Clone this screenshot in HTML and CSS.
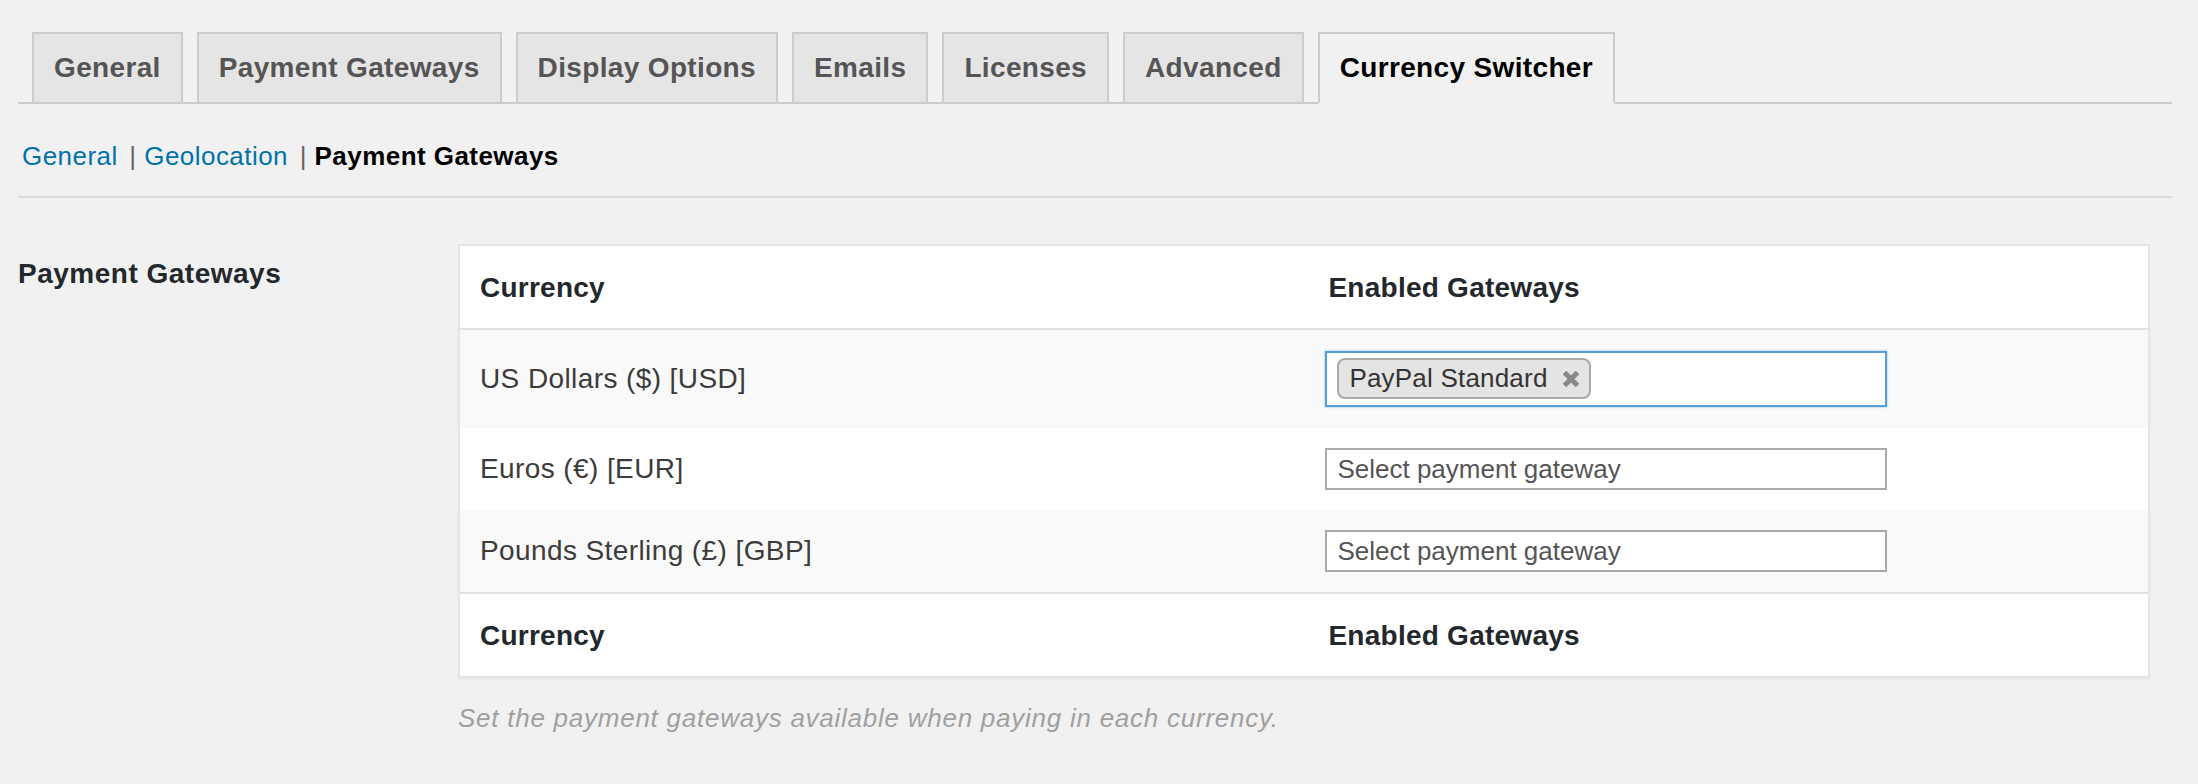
FILE: index.html
```html
<!DOCTYPE html>
<html lang="en">
<head>
    <meta charset="UTF-8">
    <meta name="viewport" content="width=device-width, initial-scale=1.0">
    <title>Currency Switcher - Payment Gateways</title>
    <link rel="stylesheet" href="styles.css">
</head>
<body>
<div class="wrap">
    <nav class="nav-tabs">
        <a href="#" class="tab">General</a>
        <a href="#" class="tab">Payment Gateways</a>
        <a href="#" class="tab">Display Options</a>
        <a href="#" class="tab">Emails</a>
        <a href="#" class="tab">Licenses</a>
        <a href="#" class="tab">Advanced</a>
        <a href="#" class="tab tab-active">Currency Switcher</a>
    </nav>

    <div class="subnav">
        <a href="#">General</a> <span class="sep">|</span> <a href="#">Geolocation</a> <span class="sep">|</span> <strong>Payment Gateways</strong>
    </div>

    <div class="settings-row">
        <div class="settings-label">Payment Gateways</div>
        <div class="settings-field">
            <table class="gateway-table">
                <thead>
                    <tr>
                        <th class="col-currency">Currency</th>
                        <th class="col-gateways">Enabled Gateways</th>
                    </tr>
                </thead>
                <tbody>
                    <tr class="row-focus">
                        <td>US Dollars ($) [USD]</td>
                        <td>
                            <div class="select select-multi">
                                <span class="chip">PayPal Standard
                                    <svg class="chip-remove" width="18" height="16" viewBox="0 0 18 16"><path d="M2.5 1.5 L15.5 14.5 M15.5 1.5 L2.5 14.5" stroke="#888" stroke-width="5"/></svg>
                                </span>
                            </div>
                        </td>
                    </tr>
                    <tr>
                        <td>Euros (€) [EUR]</td>
                        <td><div class="select">Select payment gateway</div></td>
                    </tr>
                    <tr>
                        <td>Pounds Sterling (£) [GBP]</td>
                        <td><div class="select">Select payment gateway</div></td>
                    </tr>
                </tbody>
                <tfoot>
                    <tr>
                        <th class="col-currency">Currency</th>
                        <th class="col-gateways">Enabled Gateways</th>
                    </tr>
                </tfoot>
            </table>
            <p class="description">Set the payment gateways available when paying in each currency.</p>
        </div>
    </div>
</div>
</body>
</html>
```

FILE: styles.css
```css
body {
    margin: 0;
    background-color: #f1f1f1;
    font-family: "Liberation Sans", Arial, sans-serif;
    color: #444;
}
.wrap {
    padding: 0 26px 0 18px;
}

/* top tabs */
.nav-tabs {
    display: flex;
    gap: 14px;
    padding: 32px 0 0 14px;
    border-bottom: 2px solid #ccc;
}
.tab {
    display: block;
    padding: 10px 20px;
    border: 2px solid #ccc;
    border-bottom: none;
    background: #e5e5e5;
    color: #555;
    font-size: 28px;
    line-height: 48px;
    font-weight: bold;
    letter-spacing: 0.35px;
    text-decoration: none;
    white-space: nowrap;
}
.tab-active {
    background: #f1f1f1;
    color: #000;
    margin-bottom: -2px;
    border-bottom: 2px solid #f1f1f1;
}

/* sub navigation */
.subnav {
    margin-top: 26px;
    padding: 0 0 14px 4px;
    border-bottom: 2px solid #dcdcdc;
    font-size: 26px;
    line-height: 52px;
    letter-spacing: 0.45px;
    color: #666;
}
.subnav a {
    color: #0073aa;
    text-decoration: none;
}
.subnav strong {
    color: #000;
}
.sep {
    margin-left: 4px;
}

/* settings row */
.settings-row {
    display: grid;
    grid-template-columns: 420px 1fr;
    margin-top: 18px;
}
.settings-label {
    padding: 40px 20px 40px 0;
    font-size: 28px;
    line-height: 1.3;
    font-weight: bold;
    letter-spacing: 0.5px;
    color: #23282d;
}
.settings-field {
    padding: 28px 22px 30px 20px;
}

.gateway-table {
    width: 100%;
    table-layout: fixed;
    border-spacing: 0;
    background: #fff;
    border: 2px solid #e5e5e5;
    box-shadow: 0 2px 2px rgba(0,0,0,0.04);
}
.gateway-table th {
    width: 50%;
    padding: 22px 20px 20px;
    text-align: left;
    font-size: 28px;
    line-height: 40px;
    font-weight: bold;
    letter-spacing: 0.25px;
    color: #23282d;
}
.gateway-table .col-currency {
    padding-right: 26px;
}
.gateway-table .col-gateways {
    padding-left: 23px;
}
.gateway-table thead th {
    border-bottom: 2px solid #e1e1e1;
}
.gateway-table tfoot th {
    border-top: 2px solid #e1e1e1;
}
.gateway-table td {
    padding: 20px;
    font-size: 28px;
    line-height: 40px;
    letter-spacing: 0.4px;
    color: #3c3c3c;
    vertical-align: middle;
}
.gateway-table tbody tr:nth-child(odd) {
    background: #f9f9f9;
}
.gateway-table .row-focus td {
    padding-top: 21px;
    padding-bottom: 21px;
}

/* select boxes */
.select {
    width: 562px;
    box-sizing: border-box;
    height: 42px;
    padding: 0 10px;
    border: 2px solid #aaa;
    background: #fff;
    font-size: 26px;
    line-height: 38px;
    letter-spacing: 0;
    color: #555;
    white-space: nowrap;
}
.select-multi {
    height: 56px;
    padding: 5px 10px;
    border-color: #5b9dd9;
    box-shadow: 0 0 2px rgba(30,140,190,0.6);
}
.chip {
    display: inline-flex;
    align-items: center;
    gap: 14px;
    padding: 0 9px 0 10px;
    border: 2px solid #aaa;
    border-radius: 8px;
    background: #e4e4e4;
    color: #333;
    line-height: 37px;
    letter-spacing: 0.2px;
}
.chip-remove {
    display: block;
}

.description {
    margin: 21px 0 0;
    font-size: 26px;
    line-height: 39px;
    font-style: italic;
    letter-spacing: 0.75px;
    color: #a0a0a0;
}
```
